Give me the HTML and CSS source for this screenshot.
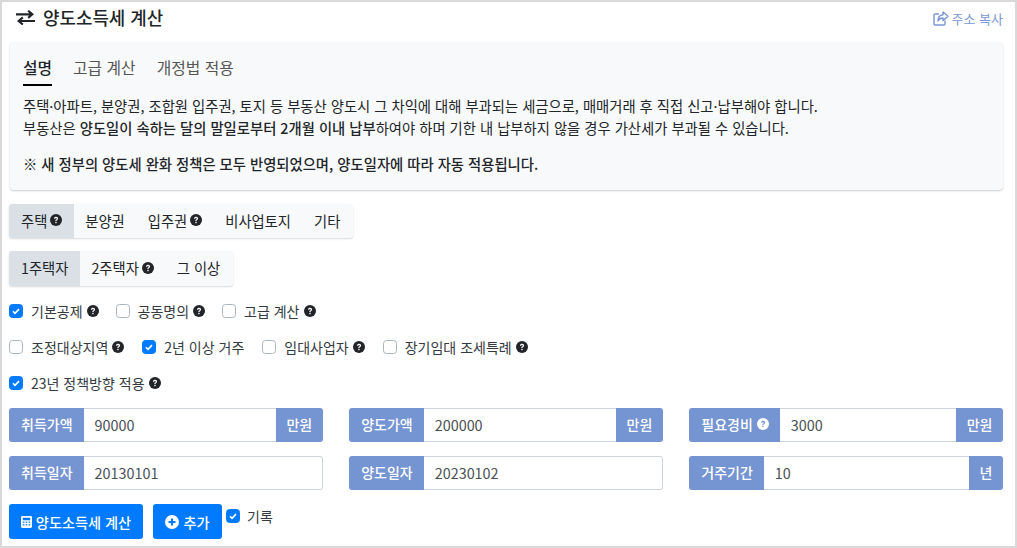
FILE: index.html
```html
<!DOCTYPE html>
<html lang="ko">
<head>
<meta charset="utf-8">
<title>양도소득세 계산</title>
<link rel="stylesheet" href="styles.css">
</head>
<body>
<svg class="defs" width="0" height="0" aria-hidden="true">
  <symbol id="q" viewBox="0 0 16 16"><circle cx="8" cy="8" r="8" fill="currentColor"/><path d="M5.300 6.200C5.400 4.600 6.600 3.800 8.100 3.800c1.600 0 2.700 1 2.700 2.300 0 1-.6 1.500-1.300 2-.6.4-.8.6-.8 1.300H7.100c0-1.100.3-1.600 1-2.100.6-.4.9-.7.9-1.100 0-.5-.4-.8-.9-.8-.6 0-1 .3-1.100 1z" fill="var(--q-fg,#fff)"/><rect x="7.050" y="10.400" width="1.800" height="1.800" rx=".4" fill="var(--q-fg,#fff)"/></symbol>
  <symbol id="c" viewBox="0 0 16 16"><path d="M4 8.300l2.700 2.700L12 5.500" fill="none" stroke="#fff" stroke-width="2.200"/></symbol>
</svg>
<main class="page">
  <header class="head">
    <h1 class="title">
      <svg class="swap" viewBox="0 0 18 14"><path d="M0 4h15M11.500 .6L15.500 4l-4 3.400M18 10.300H3M6.500 6.900L2.500 10.300l4 3.400" fill="none" stroke="#212529" stroke-width="2"/></svg>
      양도소득세 계산
    </h1>
    <a class="copy">
      <svg class="share" viewBox="0 0 16 15"><path d="M12 9.500V13a1 1 0 0 1-1 1H2a1 1 0 0 1-1-1V4a1 1 0 0 1 1-1h4" fill="none" stroke="#7b96d4" stroke-width="1.400"/><path d="M10 1l5 4.300-5 4.300V7C7.500 7 6 7.800 5 10c0-3.500 1.800-6 5-6.300z" fill="none" stroke="#7b96d4" stroke-width="1.400" stroke-linejoin="round"/></svg>
      주소 복사
    </a>
  </header>

  <section class="info">
    <nav class="tabs">
      <span class="tab active">설명</span>
      <span class="tab">고급 계산</span>
      <span class="tab">개정법 적용</span>
    </nav>
    <p class="desc">주택·아파트, 분양권, 조합원 입주권, 토지 등 부동산 양도시 그 차익에 대해 부과되는 세금으로, 매매거래 후 직접 신고·납부해야 합니다.<br>부동산은 <b class="semi">양도일이 속하는 달의 말일로부터 2개월 이내 납부</b>하여야 하며 기한 내 납부하지 않을 경우 가산세가 부과될 수 있습니다.</p>
    <p class="notice">※ 새 정부의 양도세 완화 정책은 모두 반영되었으며, 양도일자에 따라 자동 적용됩니다.</p>
  </section>

  <div class="seg seg-type">
    <span class="seg-item on">주택<svg class="q"><use href="#q"/></svg></span>
    <span class="seg-item">분양권</span>
    <span class="seg-item">입주권<svg class="q"><use href="#q"/></svg></span>
    <span class="seg-item">비사업토지</span>
    <span class="seg-item">기타</span>
  </div>
  <div class="seg seg-count">
    <span class="seg-item on">1주택자</span>
    <span class="seg-item">2주택자<svg class="q"><use href="#q"/></svg></span>
    <span class="seg-item">그 이상</span>
  </div>

  <div class="checks checks-tight">
    <label class="chk"><span class="box on"><svg><use href="#c"/></svg></span>기본공제<svg class="q"><use href="#q"/></svg></label>
    <label class="chk"><span class="box"></span>공동명의<svg class="q"><use href="#q"/></svg></label>
    <label class="chk"><span class="box"></span>고급 계산<svg class="q"><use href="#q"/></svg></label>
  </div>
  <div class="checks">
    <label class="chk"><span class="box"></span>조정대상지역<svg class="q"><use href="#q"/></svg></label>
    <label class="chk"><span class="box on"><svg><use href="#c"/></svg></span>2년 이상 거주</label>
    <label class="chk"><span class="box"></span>임대사업자<svg class="q"><use href="#q"/></svg></label>
    <label class="chk"><span class="box"></span>장기임대 조세특례<svg class="q"><use href="#q"/></svg></label>
  </div>
  <div class="checks">
    <label class="chk"><span class="box on"><svg><use href="#c"/></svg></span>23년 정책방향 적용<svg class="q"><use href="#q"/></svg></label>
  </div>

  <div class="fields">
    <div class="group"><span class="addon">취득가액</span><span class="input">90000</span><span class="addon end">만원</span></div>
    <div class="group"><span class="addon">양도가액</span><span class="input">200000</span><span class="addon end">만원</span></div>
    <div class="group"><span class="addon">필요경비<svg class="q q-light"><use href="#q"/></svg></span><span class="input">3000</span><span class="addon end">만원</span></div>
    <div class="group"><span class="addon">취득일자</span><span class="input last">20130101</span></div>
    <div class="group"><span class="addon">양도일자</span><span class="input last">20230102</span></div>
    <div class="group"><span class="addon">거주기간</span><span class="input">10</span><span class="addon end">년</span></div>
  </div>

  <div class="actions">
    <button class="btn calc"><svg class="ico" viewBox="0 0 12 14"><path fill="#fff" fill-rule="evenodd" d="M1.500 1h9A1.500 1.500 0 0 1 12 2.500v10a1.500 1.500 0 0 1-1.500 1.500h-9A1.500 1.500 0 0 1 0 12.500v-10A1.500 1.500 0 0 1 1.500 1zM2 3v2.500h8V3zM2 7v1.400h1.800V7zm3.100 0v1.400h1.800V7zm3.100 0v1.400H10V7zM2 10v1.400h1.800V10zm3.100 0v1.400h1.800V10zm3.100 0v1.400H10V10z"/></svg>양도소득세 계산</button>
    <button class="btn add"><svg class="ico-plus" viewBox="0 0 16 16"><circle cx="8" cy="8" r="8" fill="#fff"/><path d="M8 4v8M4 8h8" stroke="#007bff" stroke-width="2.400"/></svg>추가</button>
    <label class="chk rec"><span class="box on"><svg><use href="#c"/></svg></span>기록</label>
  </div>
</main>
</body>
</html>
```
FILE: styles.css
```css
* { box-sizing: border-box; }
html, body { margin: 0; padding: 0; }
body {
  width: 1017px;
  height: 548px;
  overflow: hidden;
  background: #fff;
  color: #212529;
  font-family: "Noto Sans CJK KR", "Noto Sans", sans-serif;
  font-size: 14px;
}
.defs { position: absolute; }
.page {
  height: 548px;
  border: 2px solid #d9d9d9;
  padding: 0 12px 0 7px;
}
.head {
  display: flex;
  justify-content: space-between;
  align-items: center;
  height: 32px;
  padding: 0 0 0 7px;
}
.title {
  display: flex;
  align-items: center;
  gap: 8px;
  margin: -2px 0 0;
  font-size: 17.900px;
  font-weight: 500;
  line-height: 32px;
}
.swap { width: 19px; height: 15px; }
.copy {
  display: flex;
  align-items: center;
  gap: 3px;
  color: #7b96d4;
  font-size: 13px;
  margin-top: 1px;
}
.share { width: 16px; height: 15px; margin-left: -1px; }
.info {
  margin: 8px 0 0 1px;
  height: 148px;
  background: #f8f9fa;
  border-radius: 4px;
  box-shadow: 0 1px 2px rgba(0,0,0,.2);
  padding: 12px 13px 0;
}
.tabs { display: flex; gap: 21px; height: 32px; }
.tab { font-size: 15.800px; line-height: 28px; color: #555; height: 32px; }
.tab.active { color: #212529; font-weight: 500; border-bottom: 2px solid #000; }
.desc { margin: 9px 0 0; font-size: 14.330px; line-height: 22px; color: #212529; }
.semi { font-weight: 500; }
.notice { margin: 14px 0 0; font-size: 14.330px; line-height: 22px; font-weight: 500; }
.seg {
  display: flex;
  background: #f8f9fa;
  border-radius: 3px;
  box-shadow: 0 1px 2px rgba(0,0,0,.15);
  overflow: hidden;
}
.seg-type { margin-top: 14px; height: 34px; width: 344px; }
.seg-count { margin-top: 13px; height: 35px; width: 224px; }
.seg-item {
  display: flex;
  align-items: center;
  gap: 3px;
  padding: 0 11.500px 2px;
  font-size: 14.300px;
  white-space: pre;
}
.seg-item:first-child { padding-left: 12px; }
.on.seg-item { background: #dae0e5; }
.q { width: 12px; height: 12px; color: #212529; --q-fg: #fff; flex: none; }
.q-light { color: #fff; --q-fg: #7594d2; }
.checks { display: flex; gap: 18px; height: 36px; align-items: center; padding-bottom: 1px; }
.checks-tight { gap: 17px; }
.seg-count + .checks { margin-top: 7px; }
.chk { display: flex; align-items: center; font-size: 14px; color: #343a40; gap: 4px; }
.box {
  width: 14px; height: 14px;
  margin-right: 4px;
  border: 1px solid #adb5bd;
  border-radius: 3.500px;
  background: #fff;
  flex: none;
  display: block;
}
.box.on { background: #007bff; border-color: #007bff; }
.box svg { display: block; width: 12px; height: 12px; }
.fields {
  display: grid;
  grid-template-columns: repeat(3, 1fr);
  gap: 14px 26.500px;
  margin-top: 7px;
}
.group { display: flex; height: 34px; }
.addon {
  display: flex;
  align-items: center;
  gap: 4px;
  padding: 0 11px 2px 12px;
  background: #7594d2;
  color: #fff;
  font-size: 14px;
  font-weight: 500;
  border-radius: 3px 0 0 3px;
  white-space: pre;
}
.addon.end { border-radius: 0 3px 3px 0; padding: 0 10.500px 2px; }
.input {
  flex: 1;
  display: flex;
  align-items: center;
  padding: 0 11px 2px;
  border: 1px solid #ced4da;
  border-left: 0;
  border-right: 0;
  font-size: 14.400px;
  color: #495057;
}
.input.last { border-right: 1px solid #ced4da; border-radius: 0 3px 3px 0; }
.actions { display: flex; align-items: flex-start; margin-top: 14px; }
.btn {
  display: flex;
  align-items: center;
  justify-content: center;
  height: 35px;
  background: #007bff;
  color: #fff;
  border: 0;
  border-radius: 3px;
  font: 500 14.200px "Noto Sans CJK KR", sans-serif;
  padding: 0;
}
.calc { width: 134px; gap: 4px; margin-right: 10px; }
.add { width: 69px; gap: 4px; margin-right: 4px; }
.ico { width: 11px; height: 13px; }
.ico-plus { width: 14px; height: 14px; }
.rec { gap: 3px; margin-top: 2px; }
```
